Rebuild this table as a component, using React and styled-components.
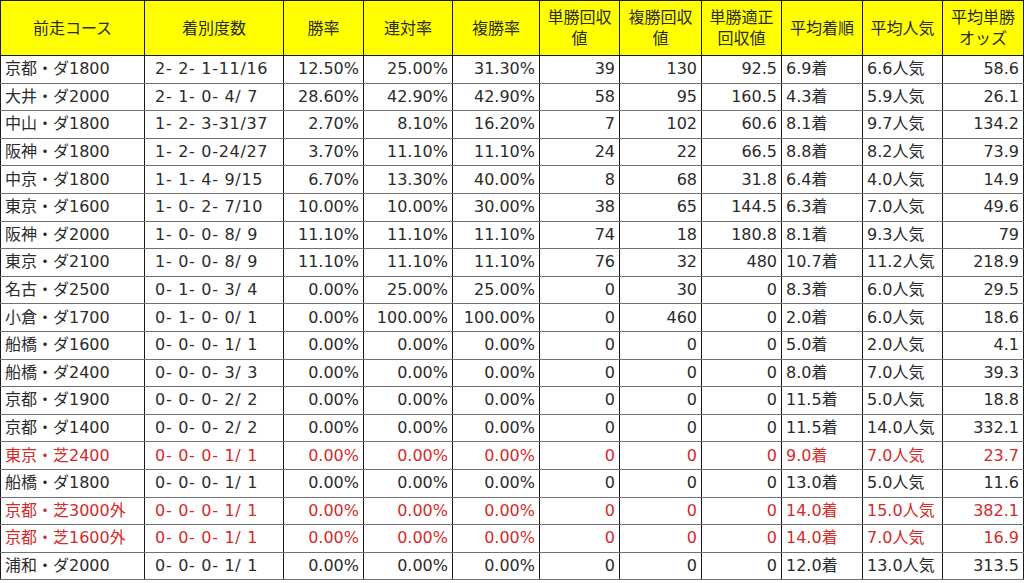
import React from "react";
import styled, { createGlobalStyle } from "styled-components";

const GlobalStyle = createGlobalStyle`
    html, body {
        margin: 0;
        padding: 0;
        background: #ffffff;
    }
    body {
        font-family: "DejaVu Sans", "Noto Sans CJK JP", sans-serif;
    }
`;

const widths = [144, 139, 80, 89, 87, 80, 82, 80, 81, 80, 81];

const headers = [
    ["前走コース"],
    ["着別度数"],
    ["勝率"],
    ["連対率"],
    ["複勝率"],
    ["単勝回収", "値"],
    ["複勝回収", "値"],
    ["単勝適正", "回収値"],
    ["平均着順"],
    ["平均人気"],
    ["平均単勝", "オッズ"],
];

// left / pre / right per column
const aligns = ["left", "pre", "right", "right", "right", "right", "right", "right", "left", "left", "right"];

const rows = [
    ["京都・ダ1800", "2- 2- 1-11/16", "12.50%", "25.00%", "31.30%", "39", "130", "92.5", "6.9着", "6.6人気", "58.6"],
    ["大井・ダ2000", "2- 1- 0- 4/ 7", "28.60%", "42.90%", "42.90%", "58", "95", "160.5", "4.3着", "5.9人気", "26.1"],
    ["中山・ダ1800", "1- 2- 3-31/37", "2.70%", "8.10%", "16.20%", "7", "102", "60.6", "8.1着", "9.7人気", "134.2"],
    ["阪神・ダ1800", "1- 2- 0-24/27", "3.70%", "11.10%", "11.10%", "24", "22", "66.5", "8.8着", "8.2人気", "73.9"],
    ["中京・ダ1800", "1- 1- 4- 9/15", "6.70%", "13.30%", "40.00%", "8", "68", "31.8", "6.4着", "4.0人気", "14.9"],
    ["東京・ダ1600", "1- 0- 2- 7/10", "10.00%", "10.00%", "30.00%", "38", "65", "144.5", "6.3着", "7.0人気", "49.6"],
    ["阪神・ダ2000", "1- 0- 0- 8/ 9", "11.10%", "11.10%", "11.10%", "74", "18", "180.8", "8.1着", "9.3人気", "79"],
    ["東京・ダ2100", "1- 0- 0- 8/ 9", "11.10%", "11.10%", "11.10%", "76", "32", "480", "10.7着", "11.2人気", "218.9"],
    ["名古・ダ2500", "0- 1- 0- 3/ 4", "0.00%", "25.00%", "25.00%", "0", "30", "0", "8.3着", "6.0人気", "29.5"],
    ["小倉・ダ1700", "0- 1- 0- 0/ 1", "0.00%", "100.00%", "100.00%", "0", "460", "0", "2.0着", "6.0人気", "18.6"],
    ["船橋・ダ1600", "0- 0- 0- 1/ 1", "0.00%", "0.00%", "0.00%", "0", "0", "0", "5.0着", "2.0人気", "4.1"],
    ["船橋・ダ2400", "0- 0- 0- 3/ 3", "0.00%", "0.00%", "0.00%", "0", "0", "0", "8.0着", "7.0人気", "39.3"],
    ["京都・ダ1900", "0- 0- 0- 2/ 2", "0.00%", "0.00%", "0.00%", "0", "0", "0", "11.5着", "5.0人気", "18.8"],
    ["京都・ダ1400", "0- 0- 0- 2/ 2", "0.00%", "0.00%", "0.00%", "0", "0", "0", "11.5着", "14.0人気", "332.1"],
    ["東京・芝2400", "0- 0- 0- 1/ 1", "0.00%", "0.00%", "0.00%", "0", "0", "0", "9.0着", "7.0人気", "23.7", true],
    ["船橋・ダ1800", "0- 0- 0- 1/ 1", "0.00%", "0.00%", "0.00%", "0", "0", "0", "13.0着", "5.0人気", "11.6"],
    ["京都・芝3000外", "0- 0- 0- 1/ 1", "0.00%", "0.00%", "0.00%", "0", "0", "0", "14.0着", "15.0人気", "382.1", true],
    ["京都・芝1600外", "0- 0- 0- 1/ 1", "0.00%", "0.00%", "0.00%", "0", "0", "0", "14.0着", "7.0人気", "16.9", true],
    ["浦和・ダ2000", "0- 0- 0- 1/ 1", "0.00%", "0.00%", "0.00%", "0", "0", "0", "12.0着", "13.0人気", "313.5"],
];

const App = () => {
    return <>
        <GlobalStyle />
        <Table>
            <colgroup>
                {widths.map((w, i) => <col key={i} style={{ width: w }} />)}
            </colgroup>
            <thead>
                <tr>
                    {headers.map((lines, i) => (
                        <HeadCell key={i}>
                            {lines.map((l, j) => <HeadLine key={j}>{l}</HeadLine>)}
                        </HeadCell>
                    ))}
                </tr>
            </thead>
            <tbody>
                {rows.map((row, r) => {
                    const red = row[11] === true;
                    return (
                        <Row key={r} $red={red}>
                            {row.slice(0, 11).map((v, c) => (
                                <Cell key={c} $align={aligns[c]}>{v}</Cell>
                            ))}
                        </Row>
                    )
                })}
            </tbody>
        </Table>
    </>
};

const Table = styled.table`
    width: 1023px;
    table-layout: fixed;
    border-collapse: collapse;
    font-size: 16px;
    color: #2b2b2b;
    thead tr {
        height: 55px;
    }
`

const HeadCell = styled.th`
    background: #ffff00;
    border: 1px solid #1a1a1a;
    font-weight: normal;
    text-align: center;
    vertical-align: middle;
    padding: 0;
    line-height: 21px;
    color: #2b2b2b;
`

const HeadLine = styled.div`
    white-space: nowrap;
`

const Row = styled.tr`
    height: 27.6px;
    color: ${props => props.$red ? "#d42a2a" : "#2b2b2b"};
`

const Cell = styled.td`
    border-top: 1px solid #707070;
    border-bottom: 1px solid #707070;
    border-left: 1px solid #1a1a1a;
    border-right: 1px solid #1a1a1a;
    padding: 0 ${props => props.$align === "right" ? "4px" : "0"} 0 ${props => props.$align === "pre" ? "10px" : props.$align === "left" ? "4px" : "0"};
    text-align: ${props => props.$align === "right" ? "right" : "left"};
    white-space: ${props => props.$align === "pre" ? "pre" : "nowrap"};
    letter-spacing: ${props => props.$align === "pre" ? "0.7px" : "normal"};
    overflow: hidden;
    line-height: 20px;
    vertical-align: middle;
`

export default App;
